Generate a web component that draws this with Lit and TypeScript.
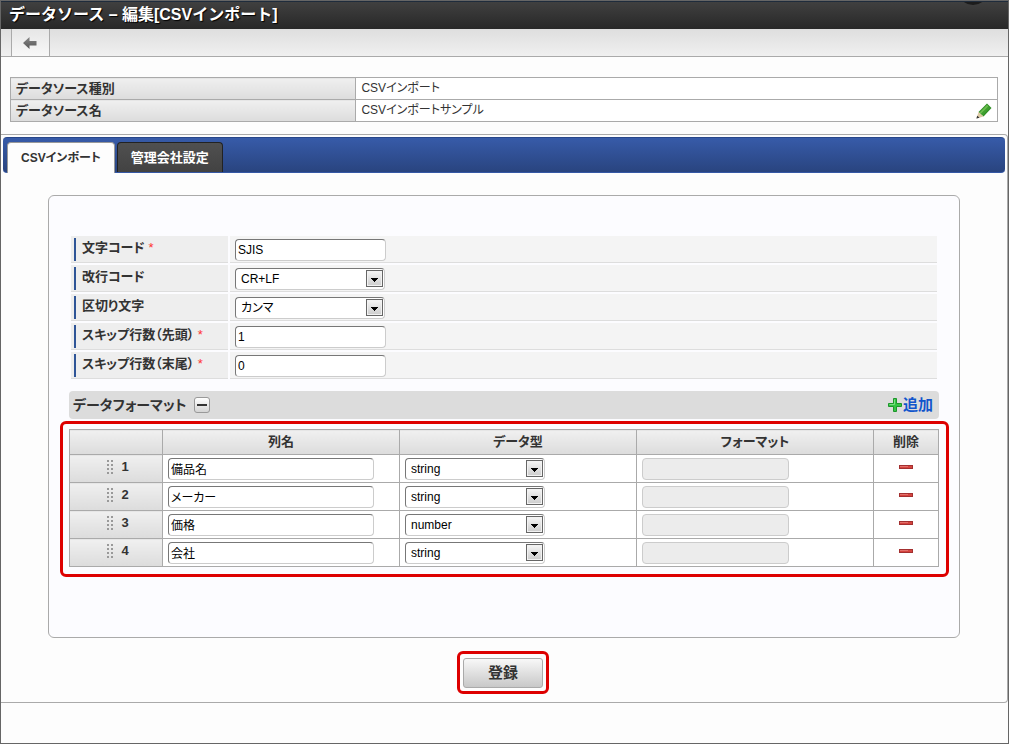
import { LitElement, html, css, svg } from "lit";
import { customElement, property } from "lit/decorators.js";

interface FormatRow {
  name: string;
  type: string;
}

const rows: FormatRow[] = [
  { name: "備品名", type: "string" },
  { name: "メーカー", type: "string" },
  { name: "価格", type: "number" },
  { name: "会社", type: "string" },
];

const controls = css`
  *,
  *::before,
  *::after {
    box-sizing: border-box;
  }
  input,
  select {
    display: block;
    width: 100%;
    height: 22px;
    margin: 0;
    padding: 0 2px;
    border: 1px solid;
    border-color: #777 #ccc #ccc #777;
    border-radius: 4px;
    background: #fff;
    color: #000;
    font: inherit;
    font-size: 12px;
    font-weight: normal;
    font-feature-settings: "palt";
  }
  input:disabled {
    background: #ececec;
    border-color: #ccc;
  }
`;

@customElement("select-box")
class SelectBox extends LitElement {
  @property() value = "";
  @property() label = "";
  @property({ attribute: false }) options: string[] = [];

  static styles = [
    controls,
    css`
      :host {
        display: block;
      }
      .box {
        position: relative;
        display: block;
      }
      select {
        appearance: none;
        padding: 0 20px 0 5px;
      }
      .arrow {
        position: absolute;
        top: 2px;
        right: 2px;
        width: 17px;
        height: 17px;
        border: 1px solid #666;
        background: linear-gradient(#f6f6f6, #ccc);
        box-shadow: inset 0 0 0 1px #f2f2f2;
        pointer-events: none;
      }
      .arrow svg {
        display: block;
      }
    `,
  ];

  render() {
    return html`<span class="box">
      <select aria-label=${this.label}>
        ${this.options.map(
          (o) => html`<option ?selected=${o === this.value}>${o}</option>`
        )}
      </select>
      <span class="arrow">
        <svg width="15" height="15" viewBox="0 0 15 15">
          <path d="M4 7h7v1h-1v1h-1v1h-1v1h-1v-1h-1v-1h-1v-1h-1z" fill="#000" />
        </svg>
      </span>
    </span>`;
  }
}

const backIcon = svg`<svg width="14" height="12" viewBox="0 0 14 12">
  <defs><linearGradient id="back" x1="0" x2="0" y1="0" y2="1"><stop offset="0" stop-color="#888"/><stop offset="1" stop-color="#555"/></linearGradient></defs>
  <path d="M0 6L6.5 0V4H13.5V8.5H6.5V12Z" fill="url(#back)"/></svg>`;

const pencilIcon = svg`<svg width="16" height="16" viewBox="0 0 16 16">
  <path d="M11 0.5L15.5 5L7.5 13.5L2.5 9Z" fill="#2f8f24"/>
  <path d="M11 1.8L12.6 3.4L5 11L3.6 9.4Z" fill="#69bd4c"/>
  <path d="M12.6 3.4L14 5L7 12.2L5 11Z" fill="#3f9f30"/>
  <path d="M2.5 9L7.5 13.5L0.5 15.5Z" fill="#dcc9a3"/>
  <path d="M1.2 12.8L3.6 14.8L0.4 15.6Z" fill="#333"/></svg>`;

const plusIcon = svg`<svg width="14" height="14" viewBox="0 0 14 14">
  <path d="M5.5 0.5h3v5h5v3h-5v5h-3v-5h-5v-3h5z" fill="#35c444" stroke="#1d962b"/>
  <path d="M6.5 1.5v5h-5" fill="none" stroke="#7be083"/></svg>`;

const minusIcon = svg`<svg width="14" height="4" viewBox="0 0 14 4">
  <rect width="14" height="4" fill="#a33030"/>
  <rect x="1" y="1" width="12" height="2" fill="#d5443f"/>
  <rect x="1" y="1" width="8" height="1" fill="#e2716c"/></svg>`;

const gripIcon = svg`<svg width="6" height="14" viewBox="0 0 6 14">
  ${[0, 4, 8, 12].map(
    (y) => svg`<path d="M0 ${y}h2v2h-2zM4 ${y}h2v2h-2z" fill="#999"/>`
  )}</svg>`;

@customElement("app-root")
class AppRoot extends LitElement {
  static styles = [
    controls,
    css`
      :host {
        display: flex;
        flex-direction: column;
        box-sizing: border-box;
        min-height: 100vh;
        border: 1px solid #666;
        background: #fdfdfd;
        color: #333;
        font-family: "Liberation Sans", "Noto Sans CJK JP", sans-serif;
        font-size: 13px;
        line-height: 20px;
        font-feature-settings: "palt";
      }
      .header {
        position: relative;
        overflow: hidden;
        height: 28px;
        padding: 0 8px;
        border-top: 1px solid #1f2c3c;
        background: linear-gradient(#404040, #282828);
      }
      .header h1 {
        margin: 0;
        color: #fff;
        font-size: 16px;
        line-height: 26px;
        text-shadow: 1px 1px 1px #000;
        font-feature-settings: normal;
      }
      .knob {
        position: absolute;
        top: -17px;
        right: 22px;
        width: 26px;
        height: 20px;
        border-radius: 50%;
        background: #1c1c1c;
      }
      .toolbar {
        display: flex;
        height: 28px;
        padding-left: 10px;
        border-bottom: 1px solid #aaa;
        background: linear-gradient(#dedede, #f0f0f0);
      }
      .back {
        display: flex;
        align-items: center;
        justify-content: center;
        width: 39px;
        padding: 0 2px 0 0;
        border: 0 solid #aaa;
        border-width: 0 1px;
        background: linear-gradient(#e6e6e6, #f8f8f8);
      }
      table {
        width: 100%;
        border-collapse: collapse;
        table-layout: fixed;
      }
      .info {
        margin: 20px 10px 12px 9px;
      }
      .info th,
      .info td {
        height: 22px;
        padding: 0 5px;
        border: 1px solid #aaa;
        text-align: left;
        line-height: 21px;
      }
      .info th {
        width: 35%;
        background: linear-gradient(#f0f0f0, #dcdcdc);
      }
      .info td {
        background: #fff;
        font-size: 12px;
      }
      .with-action {
        display: flex;
        justify-content: space-between;
        align-items: center;
      }
      .icon {
        display: inline-flex;
        align-items: center;
        justify-content: center;
        padding: 0;
        border: 0;
        background: none;
      }
      .panel {
        padding: 2px 2px 8px;
        border: 1px solid #aaa;
        border-left: 0;
        border-radius: 0 4px 4px 0;
      }
      .tabs {
        display: flex;
        align-items: flex-end;
        gap: 2px;
        height: 36px;
        padding: 0 4px;
        border: 1px solid #27468a;
        border-bottom-color: #3558a5;
        border-width: 1px 0;
        border-radius: 4px;
        background: linear-gradient(#375ba9, #29447f);
      }
      .tab {
        padding: 0 13px;
        border: 1px solid #222;
        border-bottom: 0;
        border-radius: 4px 4px 0 0;
        background: linear-gradient(#505050, #424242);
        color: #fff;
        font: inherit;
        font-weight: bold;
        line-height: 29px;
        font-feature-settings: "palt";
      }
      .tab.active {
        margin-bottom: -1px;
        border-color: #999;
        background: #fdfdfd;
        color: #333;
        font-size: 12px;
        line-height: 30px;
      }
      .box {
        margin: 22px 45px 13px;
        padding: 40px 10px 60px 11px;
        border: 1px solid #aaa;
        border-radius: 6px;
        background: #fcfcff;
      }
      .fields {
        display: grid;
        gap: 2px;
        margin: 0 12px 12px 11px;
      }
      .field {
        display: grid;
        grid-template-columns: 157px 1fr;
        gap: 2px;
        height: 27px;
      }
      .field label,
      .value {
        border-bottom: 1px solid #ddd;
      }
      .field label {
        padding: 2px 0 0 3px;
        background: #eee;
        font-weight: bold;
      }
      .mark {
        display: block;
        height: 23px;
        padding-left: 6px;
        border-left: 2px solid #2f5597;
      }
      .req {
        color: #f33;
        font-weight: normal;
      }
      .value {
        padding: 3px 5px 0;
        background: #f4f4f4;
      }
      .value input {
        width: 151px;
      }
      .value select-box {
        width: 150px;
      }
      .section {
        display: flex;
        align-items: center;
        gap: 7px;
        height: 28px;
        margin: 0 10px 2px 9px;
        padding: 0 6px 0 4px;
        border-radius: 4px;
        background: #dcdcdc;
      }
      .section h2 {
        margin: 0;
        font-size: 14px;
      }
      .toggle {
        display: flex;
        align-items: center;
        justify-content: center;
        width: 16px;
        height: 16px;
        padding: 0;
        border: 1px solid #999;
        border-radius: 3px;
        background: linear-gradient(#fff, #d4d4d4);
      }
      .add {
        display: flex;
        align-items: center;
        gap: 1px;
        margin-left: auto;
        color: #15c;
        font-size: 15px;
        font-weight: bold;
        text-decoration: none;
      }
      .marked {
        border: 3px solid #d00;
        border-radius: 6px;
      }
      .format {
        padding: 5px 7px 7px 6px;
      }
      .format th,
      .format td {
        height: 28px;
        padding: 0 5px;
        border: 1px solid #aaa;
      }
      .format thead th {
        height: 25px;
        padding: 0;
      }
      .format th {
        background: linear-gradient(#f0f0f0, #dcdcdc);
      }
      .format td {
        background: #fff;
      }
      .c-num {
        width: 93px;
      }
      .c-del {
        width: 65px;
      }
      .num {
        display: flex;
        align-items: center;
        justify-content: center;
        gap: 8px;
        padding: 0 0 3px 4px;
      }
      .format .name {
        width: 206px;
      }
      .format .fmt {
        width: 147px;
      }
      .format select-box {
        width: 140px;
      }
      .remove {
        display: flex;
        width: 100%;
        height: 20px;
        padding-bottom: 3px;
      }
      .actions {
        display: flex;
        justify-content: center;
        padding-right: 2px;
      }
      .save-frame {
        padding: 4px 3px 3px;
      }
      .save {
        display: block;
        width: 80px;
        height: 30px;
        padding: 0;
        border: 1px solid #aaa;
        border-radius: 3px;
        background: linear-gradient(#f8f8f8, #c8c8c8);
        color: #333;
        font: inherit;
        font-size: 15px;
        font-weight: bold;
      }
    `,
  ];

  private field(id: string, label: string, required: boolean, control: unknown) {
    return html`<div class="field">
      <label for=${id}
        ><span class="mark"
          >${label}${required ? html` <span class="req">*</span>` : ""}</span
        ></label
      >
      <div class="value">${control}</div>
    </div>`;
  }

  render() {
    return html`
      <header class="header">
        <h1>データソース – 編集[CSVインポート]</h1>
        <span class="knob"></span>
      </header>
      <nav class="toolbar">
        <button class="back" aria-label="戻る">${backIcon}</button>
      </nav>
      <div class="info">
        <table>
          <tr>
            <th scope="row">データソース種別</th>
            <td>CSVインポート</td>
          </tr>
          <tr>
            <th scope="row">データソース名</th>
            <td>
              <div class="with-action">
                CSVインポートサンプル
                <button class="icon" aria-label="編集">${pencilIcon}</button>
              </div>
            </td>
          </tr>
        </table>
      </div>
      <main class="panel">
        <div class="tabs" role="tablist">
          <button class="tab active" role="tab" aria-selected="true">CSVインポート</button>
          <button class="tab" role="tab" aria-selected="false">管理会社設定</button>
        </div>
        <section class="box">
          <div class="fields">
            ${this.field("charset", "文字コード", true, html`<input id="charset" value="SJIS" />`)}
            ${this.field(
              "newline",
              "改行コード",
              false,
              html`<select-box id="newline" label="改行コード" value="CR+LF" .options=${["CR+LF", "CR", "LF"]}></select-box>`
            )}
            ${this.field(
              "separator",
              "区切り文字",
              false,
              html`<select-box id="separator" label="区切り文字" value="カンマ" .options=${["カンマ", "タブ"]}></select-box>`
            )}
            ${this.field("skip-head", "スキップ行数（先頭）", true, html`<input id="skip-head" value="1" />`)}
            ${this.field("skip-tail", "スキップ行数（末尾）", true, html`<input id="skip-tail" value="0" />`)}
          </div>
          <div class="section">
            <h2>データフォーマット</h2>
            <button class="toggle" aria-label="閉じる">
              <svg width="10" height="2"><rect width="10" height="2" fill="#333" /></svg>
            </button>
            <a class="add" href="#">${plusIcon}追加</a>
          </div>
          <div class="marked format">
            <table>
              <thead>
                <tr>
                  <th class="c-num"></th>
                  <th scope="col">列名</th>
                  <th scope="col">データ型</th>
                  <th scope="col">フォーマット</th>
                  <th scope="col" class="c-del">削除</th>
                </tr>
              </thead>
              <tbody>
                ${rows.map(
                  (r, i) => html`<tr>
                    <th scope="row"><div class="num">${gripIcon}${i + 1}</div></th>
                    <td><input class="name" aria-label="列名" value=${r.name} /></td>
                    <td>
                      <select-box label="データ型" value=${r.type} .options=${["string", "number"]}></select-box>
                    </td>
                    <td><input class="fmt" aria-label="フォーマット" disabled /></td>
                    <td><button class="icon remove" aria-label="削除">${minusIcon}</button></td>
                  </tr>`
                )}
              </tbody>
            </table>
          </div>
        </section>
        <div class="actions">
          <div class="marked save-frame"><button class="save">登録</button></div>
        </div>
      </main>
    `;
  }
}
